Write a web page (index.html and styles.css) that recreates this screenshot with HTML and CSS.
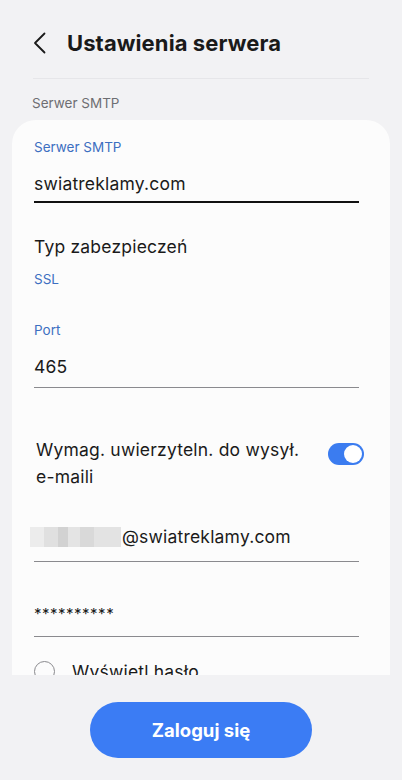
FILE: index.html
```html
<!DOCTYPE html>
<html lang="pl">
<head>
<meta charset="utf-8">
<title>Ustawienia serwera</title>
<link rel="stylesheet" href="styles.css">
</head>
<body>
<div class="page">
  <header class="header">
    <svg class="back" width="14" height="22" viewBox="0 0 14 22" aria-hidden="true">
      <path d="M11.5 1.5 L2 11 L11.5 20.5" fill="none" stroke="#1a1a1a" stroke-width="1.8" stroke-linecap="round" stroke-linejoin="round"/>
    </svg>
    <h1 class="title">Ustawienia serwera</h1>
  </header>
  <div class="divider"></div>
  <main class="scroll">
    <div class="section-label">Serwer SMTP</div>
    <section class="card">
      <div class="field-label">Serwer SMTP</div>
      <div class="field-input focused">swiatreklamy.com</div>

      <div class="item-title">Typ zabezpieczeń</div>
      <div class="item-sub">SSL</div>

      <div class="field-label port-label">Port</div>
      <div class="field-input plain">465</div>

      <div class="toggle-row">
        <div class="toggle-text">Wymag. uwierzyteln. do wysył.<br>e-maili</div>
        <div class="switch"><div class="knob"></div></div>
      </div>

      <div class="field-input plain email">
        <span class="blur" aria-hidden="true"><i class="b1"></i><i class="b2"></i><i class="b3"></i><i class="b4"></i><i class="b5"></i><i class="b6"></i></span>@swiatreklamy.com
      </div>

      <div class="field-input plain password">**********</div>

      <div class="radio-row">
        <span class="radio"></span>
        <span class="radio-text">Wyświetl hasło</span>
      </div>
    </section>
  </main>
  <footer class="footer">
    <button class="login">Zaloguj się</button>
  </footer>
</div>
</body>
</html>
```
FILE: styles.css
```css
* { box-sizing: border-box; }
html, body { margin: 0; padding: 0; }
body {
  background: #f2f2f4;
  font-family: Inter, Roboto, "Noto Sans", sans-serif;
  color: #1a1a1a;
}
.page {
  width: 402px;
  height: 780px;
  display: flex;
  flex-direction: column;
  overflow: hidden;
}
.header {
  height: 78px;
  display: flex;
  align-items: center;
  padding: 8px 0 0 33px;
  gap: 20px;
  flex: none;
}
.back { flex: none; margin-top: 0; }
.title {
  margin: 0;
  font-size: 22px;
  font-weight: 700;
  letter-spacing: 0.1px;
}
.divider {
  height: 1px;
  margin: 0 33px;
  background: #e6e6e9;
  flex: none;
}
.scroll {
  height: 596px;
  flex: none;
  overflow: hidden;
}
.section-label {
  font-size: 13.5px;
  color: #6e6e72;
  line-height: 16px;
  padding: 16px 0 0 32px;
}
.card {
  margin: 9px 12px 0;
  background: #fcfcfc;
  border-radius: 24px;
  padding: 19px 31px 40px 22px;
}
.field-label {
  font-size: 13.5px;
  line-height: 16px;
  color: #3d6fc1;
}
.field-input {
  font-size: 17.5px;
  letter-spacing: 0.2px;
  line-height: 24px;
  margin-top: 17px;
  padding-bottom: 5px;
  border-bottom: 2px solid #111;
}
.field-input.plain {
  border-bottom: 1px solid #8a8a8e;
  padding-bottom: 8px;
}
.item-title {
  font-size: 17.5px;
  letter-spacing: 0.2px;
  line-height: 24px;
  margin-top: 32px;
}
.item-sub {
  font-size: 13.5px;
  line-height: 16px;
  color: #3d6fc1;
  margin-top: 12px;
}
.port-label { margin-top: 35px; }
.toggle-row {
  display: flex;
  align-items: flex-start;
  justify-content: space-between;
  margin-top: 48px;
  padding-left: 2px;
}
.toggle-text {
  font-size: 17.5px;
  letter-spacing: 0.2px;
  line-height: 27px;
}
.switch {
  width: 36px;
  height: 22px;
  border-radius: 11px;
  background: #3b7cf0;
  margin: 7px -5px 0 0;
  position: relative;
  flex: none;
}
.knob {
  position: absolute;
  right: 2px;
  top: 2px;
  width: 18px;
  height: 18px;
  border-radius: 50%;
  background: #fff;
}
.field-input.email {
  margin-top: 35px;
  padding-bottom: 12px;
  display: flex;
  align-items: center;
}
.blur {
  display: inline-flex;
  width: 91px;
  height: 20px;
  margin-left: -4px;
  margin-right: 1px;
}
.blur i { display: block; height: 100%; }
.b1 { width: 14px; background: #ececec; }
.b2 { width: 14px; background: #e0e0e0; }
.b3 { width: 10px; background: #d2d2d2; }
.b4 { width: 12px; background: #e4e4e4; }
.b5 { width: 14px; background: #d9d9d9; }
.b6 { width: 27px; background: #e3e3e3; }
.field-input.password {
  margin-top: 40px;
  font-size: 15px;
  padding-bottom: 10px;
  letter-spacing: 0.5px;
}
.radio-row {
  display: flex;
  align-items: center;
  gap: 17px;
  margin-top: 24px;
}
.radio {
  width: 21px;
  height: 21px;
  border-radius: 50%;
  border: 1.5px solid #8a8a8e;
  flex: none;
}
.radio-text {
  font-size: 17.5px;
  letter-spacing: 0.2px;
}
.footer {
  flex: 1;
  display: flex;
  justify-content: center;
  padding-top: 27px;
}
.login {
  width: 222px;
  height: 56px;
  border: none;
  border-radius: 28px;
  background: #3b7cf4;
  color: #fff;
  font-family: Inter, Roboto, "Noto Sans", sans-serif;
  font-size: 18.5px;
  font-weight: 700;
}
```
